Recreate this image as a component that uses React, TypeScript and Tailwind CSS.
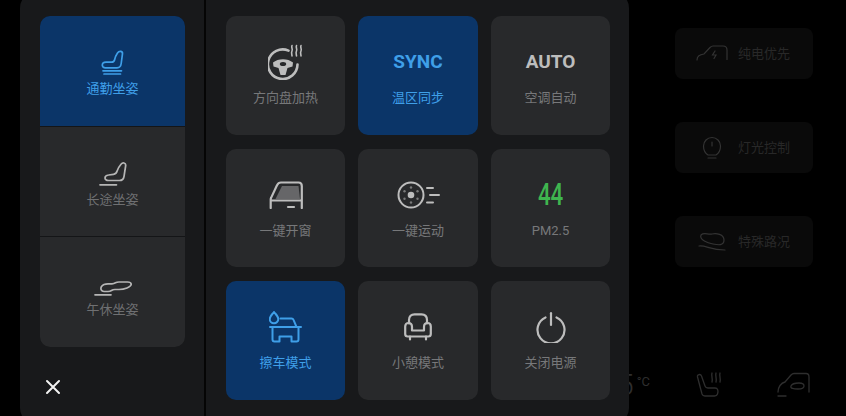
import React from 'react'

const FONT = "font-['Roboto','Noto_Sans_CJK_SC',sans-serif]"

const SeatUpright = () => (
    <svg width="23" height="25" viewBox="0 0 23 25" fill="none" stroke="currentColor" strokeWidth="1.7" strokeLinecap="round" strokeLinejoin="round">
        <path d="M16.500 3C18 .8 21.700 .8 21.500 3.700L20.200 13.500C19.900 16 18.500 17.800 16 17.800H4.500C2.400 17.800 1.300 16.600 1.300 15.200 1.300 13.400 2.900 12.200 5 12.200H10.500C12.200 12.200 13.300 11.300 13.700 9.500 14.200 7 15 5.200 16.500 3Z" />
        <path d="M2 20.800H20.500M3 24H19.500" />
    </svg>
)

const SeatRecline = () => (
    <svg width="28" height="24" viewBox="0 0 28 24" fill="none" stroke="currentColor" strokeWidth="1.7" strokeLinecap="round" strokeLinejoin="round">
        <path d="M22 2.200C23.500 .4 27 .4 26.700 3.500L25 14.500C24.600 17 23 18.500 20.500 18.500H9.500C7.400 18.500 6 17.500 6 16 6 14.300 7.500 13.200 9.500 13L14.500 12.300C16.400 12 17.500 11.200 18 9.300 18.700 6.500 20 4.500 22 2.200Z" />
        <path d="M1 22.800H17.500" />
    </svg>
)

const SeatFlat = () => (
    <svg width="38" height="15" viewBox="0 0 38 15" fill="none" stroke="currentColor" strokeWidth="1.700" strokeLinecap="round" strokeLinejoin="round">
        <path d="M7.500 5.500C9 3.300 11.500 2.800 14 2.800H18C19.700 2.800 20.500 2.400 21.500 1.800 22.500 1.200 23.500 1 25 1H33.500C36 1 37.200 2 37.200 3.300 37.200 4.800 35.500 6 33 7 30.500 8 28 8.500 25 8.500H21C19.500 8.500 18.500 8.800 17.500 9.500 16.500 10.200 15.500 10.500 14 10.500H10C7.200 10.500 6.200 7.800 7.500 5.500Z" />
        <path d="M1 13.800H17" />
    </svg>
)

const WheelHeat = () => (
    <svg width="35" height="36" viewBox="0 0 35 36" fill="none" stroke="currentColor" strokeLinecap="round">
        <path d="M20.500 6.600A14.800 14.800 0 1 0 29.500 20.500" strokeWidth="2.600" />
        <path d="M5 18.500C10 14 20 14 25 18.500L24.500 22.500 19.500 24 17.500 31H12.500L10.500 24 5.500 22.500Z" fill="currentColor" stroke="none" />
        <ellipse cx="15" cy="20" rx="3.200" ry="2" fill="#28292b" stroke="none" />
        <path d="M24 1.500C23 3.500 25 5 24 7S24 10.500 24 12M28.500 1.500C27.500 3.500 29.500 5 28.500 7S28.500 10.500 28.500 12M33 1.500C32 3.500 34 5 33 7S33 10.500 33 12" strokeWidth="1.600" />
    </svg>
)

const CarWindow = () => (
    <svg width="34" height="28" viewBox="0 0 34 28" fill="none">
        <path d="M6.500 18 13 5H29.500L31 18Z" fill="currentColor" opacity="0.42" />
        <path d="M1.700 27V18.500C1.700 17.800 1.900 17.200 2.200 16.600L8 4.300C8.800 2.500 10 1.500 12 1.500H29.500C31.700 1.500 32.800 2.800 32.800 5V27M1.700 19.500H32.800" stroke="currentColor" strokeWidth="2.200" strokeLinecap="round" strokeLinejoin="round" />
        <path d="M19 26H25" stroke="currentColor" strokeWidth="2.200" strokeLinecap="round" />
    </svg>
)

const SportWheel = () => (
    <svg width="43" height="28" viewBox="0 0 43 28" fill="none" stroke="currentColor" strokeLinecap="round">
        <circle cx="14" cy="14" r="12.500" strokeWidth="2" />
        <circle cx="14" cy="14" r="3.300" fill="currentColor" stroke="none" />
        <g fill="currentColor" stroke="none" opacity="0.55">
            <circle cx="14" cy="6.500" r="1.200" />
            <circle cx="14" cy="21.500" r="1.200" />
            <circle cx="7.500" cy="10.200" r="1.200" />
            <circle cx="20.500" cy="10.200" r="1.200" />
            <circle cx="7.500" cy="17.800" r="1.200" />
            <circle cx="20.500" cy="17.800" r="1.200" />
        </g>
        <path d="M30 7h6M33 14h9M30 21.500h6" strokeWidth="2" />
    </svg>
)

const CarWash = () => (
    <svg width="33" height="32" viewBox="0 0 33 32" fill="none" stroke="currentColor" strokeWidth="2" strokeLinecap="round" strokeLinejoin="round">
        <path d="M5 1C7 3.500 9.300 5.500 9.300 8A4.300 4.300 0 0 1 .7 8C.7 5.500 3 3.500 5 1Z" />
        <path d="M1 16H32" />
        <path d="M11.500 7.500H22.500C23.500 7.500 24.200 8 24.600 9L27.500 16" />
        <path d="M3.500 16V28.500C3.500 29.800 4.200 30.500 5.500 30.500H10.500V25.500H22.500V30.500H27.500C28.800 30.500 29.500 29.800 29.500 28.500V16" />
    </svg>
)

const Armchair = () => (
    <svg width="28" height="28" viewBox="0 0 28 28" fill="none" stroke="currentColor" strokeWidth="2.200" strokeLinecap="round" strokeLinejoin="round">
        <path d="M5 10.500V7C5 3.500 7.200 1.300 10.500 1.300H17.500C20.800 1.300 23 3.500 23 7V10.500" />
        <path d="M8 17.500V14C8 11.500 6.500 10 4.500 10S1.200 11.500 1.200 13.500V21C1.200 22.500 2.200 23.500 3.700 23.500H24.300C25.800 23.500 26.800 22.500 26.800 21V13.500C26.800 11.500 25.500 10 23.500 10S20 11.500 20 14V17.500Z" />
        <path d="M6 23.500V26.500M22 23.500V26.500" />
    </svg>
)

const Power = () => (
    <svg width="30" height="31" viewBox="0 0 30 31" fill="none" stroke="currentColor" strokeWidth="2.200" strokeLinecap="round">
        <path d="M9.500 5.500A13.500 13.500 0 1 0 20.500 5.500" />
        <path d="M15 1.200V13" />
    </svg>
)

interface TileProps
{
    label: string;
    active?: boolean;
    icon: React.ReactNode;
}

const Tile: React.FC<TileProps> = ({label, active, icon}: TileProps) =>
{
    return (
        <div className={`flex flex-col items-center rounded-[10px] ${active ? "bg-[#0b3568] text-[#3f9fe8]" : "bg-[#28292b] text-[#bdbdbd]"}`}>
            <div className="h-[36px] mt-[28px] flex items-center justify-center">{icon}</div>
            <span className={`mt-[8px] text-[13px] leading-[20px] ${active ? "text-[#3f9fe8]" : "text-[#77787a]"}`}>{label}</span>
        </div>
    )
}

const SeatRow = ({label, active, icon}: {label: string, active?: boolean, icon: React.ReactNode}) =>
{
    return (
        <div className={`flex-1 flex flex-col items-center ${active ? "bg-[#0b3568] text-[#3f9fe8]" : "bg-[#28292b] text-[#b5b5b5]"}`}>
            <div className="h-[30px] mt-[29px] flex items-end justify-center">{icon}</div>
            <span className={`mt-[4px] text-[13px] leading-[20px] ${active ? "text-[#3f9fe8]" : "text-[#6f7072]"}`}>{label}</span>
        </div>
    )
}

const DimCard = ({label, icon}: {label: string, icon: React.ReactNode}) =>
{
    return (
        <div className="h-[51px] w-[138px] pl-5 rounded-[8px] bg-[#0a0a0a] flex items-center text-[#333333]">
            <div className="w-[34px] flex justify-center">{icon}</div>
            <span className="ml-[9px] text-[13px] text-[#282828]">{label}</span>
        </div>
    )
}

const App = () =>
{
    return (
        <div className={`w-[846px] h-[416px] bg-black overflow-hidden flex ${FONT}`}>

            <div className="w-[609px] h-[432px] -mt-2 ml-5 bg-[#18191b] rounded-[16px] flex shrink-0 relative z-10">

                <div className="w-[186px] pt-[24px] pl-5 border-r-2 border-[#050505] flex flex-col shrink-0">
                    <div className="w-[145px] h-[331px] flex flex-col gap-px bg-[#141517] rounded-[10px] overflow-hidden">
                        <SeatRow label="通勤坐姿" active icon={<SeatUpright />} />
                        <SeatRow label="长途坐姿" icon={<SeatRecline />} />
                        <SeatRow label="午休坐姿" icon={<SeatFlat />} />
                    </div>
                    <svg className="mt-[32px] ml-[5px]" width="16" height="16" viewBox="0 0 16 16" stroke="#f2f2f2" strokeWidth="2" strokeLinecap="round">
                        <path d="M2 2l12 12M14 2L2 14" />
                    </svg>
                </div>

                <div className="pt-[24px] pl-5 grid grid-cols-[119px_120px_119px] grid-rows-[119px_118px_119px] gap-x-[13px] gap-y-[14px] content-start">
                    <Tile label="方向盘加热" icon={<WheelHeat />} />
                    <Tile label="温区同步" active icon={<span className="text-[19px] font-bold">SYNC</span>} />
                    <Tile label="空调自动" icon={<span className="text-[19px] font-bold">AUTO</span>} />
                    <Tile label="一键开窗" icon={<CarWindow />} />
                    <Tile label="一键运动" icon={<SportWheel />} />
                    <Tile label="PM2.5" icon={<span className="text-[31px] font-medium text-[#3fb54f] scale-x-[0.72]">44</span>} />
                    <Tile label="擦车模式" active icon={<CarWash />} />
                    <Tile label="小憩模式" icon={<Armchair />} />
                    <Tile label="关闭电源" icon={<Power />} />
                </div>

            </div>

            <div className="flex-1 flex flex-col pt-7 pb-4 text-[#333333]">
                <div className="pl-[46px] flex flex-col gap-[43px]">
                    <DimCard label="纯电优先" icon={
                        <svg width="32" height="18" viewBox="0 0 32 18" fill="none" stroke="currentColor" strokeWidth="1.200" strokeLinecap="round"><path d="M1 15C1 11 4 9.500 8 9L14 2.500C15 1.500 16 1 17 1H27C29.500 1 31 2.500 31 5V14.500" /><path d="M19 6L16.500 10H20L18 13.500" /></svg>
                    } />
                    <DimCard label="灯光控制" icon={
                        <svg width="20" height="26" viewBox="0 0 20 26" fill="none" stroke="currentColor" strokeWidth="1.200" strokeLinecap="round"><path d="M6 20C3 18 1.500 15 1.500 11A8.500 8.500 0 0 1 18.500 11C18.500 15 17 18 14 20Z" /><path d="M6 23H14M10 7V11" /></svg>
                    } />
                    <DimCard label="特殊路况" icon={
                        <svg width="28" height="20" viewBox="0 0 28 20" fill="none" stroke="currentColor" strokeWidth="1.200" strokeLinecap="round"><path d="M3 3C6 0 10 3 14 2S26 2 26 8 20 13 15 12 1 8 3 3Z" /><path d="M1 14C8 13 12 18 27 18" /></svg>
                    } />
                </div>
                <div className="mt-auto flex items-center text-[#2e2e2e]">
                    <div className="w-[67px] flex items-start -ml-[12px] mr-[12px]">
                        <span className="text-[30px] leading-[30px] font-light">5</span>
                        <span className="ml-[3px] mt-[3px] text-[13px] leading-[18px]">°C</span>
                    </div>
                    <svg width="27" height="28" viewBox="0 0 27 28" fill="none" stroke="currentColor" strokeWidth="1.300" strokeLinecap="round" strokeLinejoin="round">
                        <path d="M1.500 6C1 3.500 4.500 2.500 5.500 5L9 15C9.500 16.500 10.500 17 12 17H19C22 17 22.500 20 21.500 23 21 24.500 20 25 18.500 25H9C7.500 25 6.500 24.500 6 23Z" />
                        <path d="M16 2C15 5 17 7 16 11M20 2C19 5 21 7 20 11M24 2C23 5 25 7 24 11" />
                    </svg>
                    <svg className="ml-[54px]" width="34" height="26" viewBox="0 0 34 26" fill="none" stroke="currentColor" strokeWidth="1.300" strokeLinecap="round" strokeLinejoin="round">
                        <path d="M1 20C1 15 4 11 8 10L14 3C15 2 16 1.500 17 1.500H29C31 1.500 32 3 32 5V20" />
                        <path d="M14 14C15 11.500 18 11 22 11S27 12.500 27 14 25 17 21 17 13 16.500 14 14Z" />
                        <path d="M1 24H9" />
                    </svg>
                </div>
            </div>

        </div>
    )
}

export default App
